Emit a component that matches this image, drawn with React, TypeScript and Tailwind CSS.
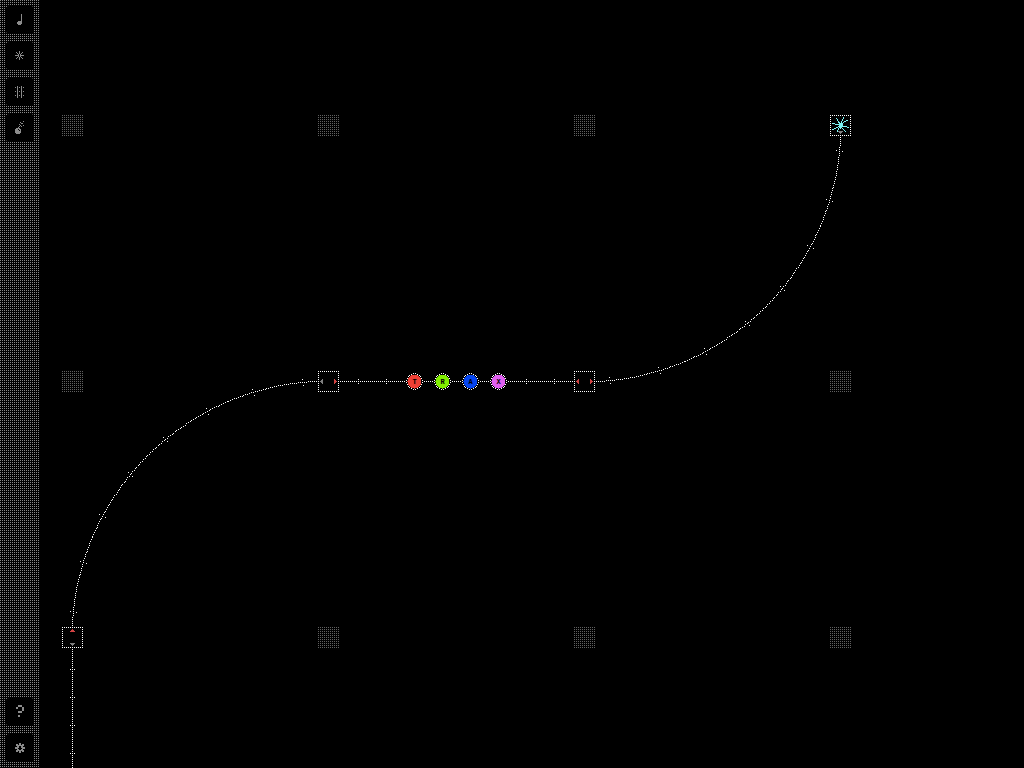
import type { ReactNode } from "react";

type Point = { x: number; y: number };

const icons = {
  note: [
    "....#.",
    "....#.",
    "....#.",
    "....#.",
    "....#.",
    "....#.",
    "....#.",
    ".####.",
    "#####.",
    "#####.",
    ".###..",
    "......",
  ],
  burst: [
    "....#.....",
    ".#..#..#..",
    "..#.#.#...",
    "...#.#....",
    "####.####.",
    "...#.#....",
    "..#.#.#...",
    ".#..#..#..",
    "....#.....",
    "..........",
  ],
  rails: [
    "..#...#...",
    "#.#.#.#.#.",
    "..#...#...",
    "..#...#...",
    "..#...#...",
    "#.#.#.#.#.",
    "..#...#...",
    "..#...#...",
    "..#...#...",
    "#.#.#.#.#.",
    "..#...#...",
    "..#...#...",
  ],
  bomb: [
    "........#.",
    ".....#....",
    "......##..",
    "....#.....",
    ".....#..#.",
    "....#.#...",
    "...#......",
    ".####.....",
    "###.##....",
    "####.#....",
    "######....",
    "######....",
    ".####.....",
    "..........",
  ],
  help: [
    "..####..",
    "..####..",
    "##....##",
    "##....##",
    "......##",
    "......##",
    "..####..",
    "..####..",
    "........",
    "........",
    "..##....",
    "..##....",
    "........",
    "........",
  ],
  gear: [
    "....##....",
    ".##.##.##.",
    ".########.",
    "..##..##..",
    "####..####",
    "###....###",
    "..##..##..",
    ".########.",
    ".##.##.##.",
    "....##....",
  ],
};

const cyanBurst = [
  "...........#.....",
  "....#......#.....",
  ".....#....#......",
  ".....#....#...##.",
  "......#..#..##...",
  "......##.#.#.....",
  "###....####......",
  "...########......",
  ".......####......",
  "......#########..",
  "....##.###.....##",
  "..##..#.#.#......",
  "##....#....#.....",
  ".....#......#....",
  ".....#.......#...",
];

function Pixels({ map }: { map: string[] }) {
  return (
    <>
      {map.flatMap((row, y) =>
        [...row].map((c, x) =>
          c === "#" ? <rect key={`${x}-${y}`} x={x} y={y} width="1" height="1" /> : null,
        ),
      )}
    </>
  );
}

function ToolButton({ label, map }: { label: string; map: string[] }) {
  return (
    <button
      type="button"
      aria-label={label}
      className="flex size-7 items-center justify-center rounded-[3px] bg-black text-[#8c8c8c]"
    >
      <svg width={map[0].length} height={map.length} fill="currentColor" shapeRendering="crispEdges" aria-hidden="true">
        <Pixels map={map} />
      </svg>
    </button>
  );
}

function Dots({ points, color = "#ffffff" }: { points: Point[]; color?: string }) {
  return (
    <g fill={color}>
      {points.map((p, i) => (
        <rect key={i} x={p.x} y={p.y} width="1" height="1" />
      ))}
    </g>
  );
}

const RADIUS = 256.4;

// A quarter turn from the horizontal rail to the vertical rail; dir picks the quadrant.
function curve(cx: number, cy: number, dir: number): Point[] {
  const points: Point[] = [];
  const at = (angle: number, r: number) => {
    points.push({
      x: Math.round(cx + dir * r * Math.sin(angle)),
      y: Math.round(cy + dir * r * Math.cos(angle)),
    });
  };
  for (let i = 0; i <= 201; i++) at(((i / 201) * Math.PI) / 2, RADIUS);
  for (let i = 0; i < 8; i++) {
    const angle = ((5.76 + i * 11.21) * Math.PI) / 180;
    at(angle, RADIUS - 3);
    at(angle, RADIUS + 3);
  }
  return points;
}

function horizontal(from: number, to: number, y: number): Point[] {
  const points: Point[] = [];
  for (let x = from; x <= to; x += 2) points.push({ x, y });
  return points;
}

function vertical(x: number, from: number, to: number): Point[] {
  const points: Point[] = [];
  for (let y = from; y <= to; y += 2) points.push({ x, y });
  return points;
}

const straightTicks = [358, 386, 526, 554].flatMap((x) => [
  { x, y: 379 },
  { x, y: 383 },
]);

const lowerTicks = Array.from({ length: 40 }, (_, i) => 669 + i * 28).flatMap((y) => [
  { x: 70, y },
  { x: 74, y },
]);

const track = [
  ...curve(328, 637, -1),
  ...curve(584, 125, 1),
  ...horizontal(328, 584, 381),
  ...vertical(72, 637, 1800),
  ...straightTicks,
  ...lowerTicks,
];

const emptyNodes = [
  [72, 125], [328, 125], [584, 125],
  [72, 381], [840, 381],
  [328, 637], [584, 637], [840, 637],
];

function Station({ x, y, children }: { x: number; y: number; children: ReactNode }) {
  const border = [
    ...horizontal(-10, 10, -10),
    ...horizontal(-10, 10, 10),
    ...vertical(-10, -8, 8),
    ...vertical(10, -8, 8),
  ];
  return (
    <g transform={`translate(${x} ${y})`}>
      <rect x="-10" y="-10" width="21" height="21" fill="#000000" />
      {children}
      <Dots points={border} />
    </g>
  );
}

const RED = "#d24343";
const GREY = "#808080";

const arrowLeft = ["..#", ".##", "###", ".##", "..#"];
const arrowRight = ["#..", "##.", "###", "##.", "#.."];
const arrowUp = ["..#..", ".###.", "#####"];
const arrowDown = ["#####", ".###.", "..#.."];

function Arrow({ map, x, y, color }: { map: string[]; x: number; y: number; color: string }) {
  return (
    <g transform={`translate(${x} ${y})`} fill={color}>
      <Pixels map={map} />
    </g>
  );
}

const ringPoints: Point[] = [
  [1, 8], [3, 7], [5, 6], [6, 5], [7, 3], [8, 1],
].flatMap(([x, y]) => [
  { x, y },
  { x: -x, y },
  { x, y: -y },
  { x: -x, y: -y },
]);

const marbles = [
  { x: 414, letter: "T", color: "#ee4035" },
  { x: 442, letter: "R", color: "#80ee00" },
  { x: 470, letter: "A", color: "#0645ee" },
  { x: 498, letter: "X", color: "#e060f0" },
];

function Board() {
  return (
    <svg className="absolute inset-0 size-full" shapeRendering="crispEdges" aria-label="Track board">
      <defs>
        <pattern id="empty" width="2" height="2" patternUnits="userSpaceOnUse">
          <rect y="1" width="1" height="1" fill="#606060" />
        </pattern>
      </defs>
      {emptyNodes.map(([x, y]) => (
        <rect key={`${x}-${y}`} x={x - 10} y={y - 10} width="21" height="21" fill="url(#empty)" />
      ))}
      <Dots points={track} />
      <Station x={328} y={381}>
        <Arrow map={arrowLeft} x={-8} y={-2} color={GREY} />
        <Arrow map={arrowRight} x={6} y={-2} color={RED} />
      </Station>
      <Station x={584} y={381}>
        <Arrow map={arrowLeft} x={-8} y={-2} color={RED} />
        <Arrow map={arrowRight} x={6} y={-2} color={RED} />
      </Station>
      <Station x={72} y={637}>
        <Arrow map={arrowUp} x={-2} y={-8} color={RED} />
        <Arrow map={arrowDown} x={-2} y={6} color={GREY} />
      </Station>
      <Station x={840} y={125}>
        <g transform="translate(-8 -8)" fill="#7cf4f4">
          <Pixels map={cyanBurst} />
        </g>
        <Arrow map={arrowDown} x={-2} y={6} color={GREY} />
      </Station>
      {marbles.map((m) => (
        <g key={m.letter} transform={`translate(${m.x} 381)`}>
          <circle cx="0.5" cy="0.5" r="9" fill="#000000" />
          <circle cx="0.5" cy="0.5" r="7" fill={m.color} />
          <Dots points={ringPoints} />
          <text
            x="0.5"
            y="3"
            textAnchor="middle"
            fill="#000000"
            className="font-['Liberation_Mono',monospace] text-[7px] font-bold"
          >
            {m.letter}
          </text>
        </g>
      ))}
    </svg>
  );
}

export default function App() {
  return (
    <div className="relative flex min-h-screen overflow-hidden bg-black">
      <Board />
      <nav
        aria-label="Tools"
        className="relative flex w-10 flex-col justify-between bg-[#888888] bg-[linear-gradient(90deg,transparent_50%,#000_50%),linear-gradient(180deg,transparent_50%,#000_50%)] bg-size-[2px_2px] p-1.5"
      >
        <div className="flex flex-col gap-2">
          <ToolButton label="Notes" map={icons.note} />
          <ToolButton label="Burst" map={icons.burst} />
          <ToolButton label="Tracks" map={icons.rails} />
          <ToolButton label="Clear" map={icons.bomb} />
        </div>
        <div className="flex flex-col gap-2">
          <ToolButton label="Help" map={icons.help} />
          <ToolButton label="Settings" map={icons.gear} />
        </div>
      </nav>
    </div>
  );
}
